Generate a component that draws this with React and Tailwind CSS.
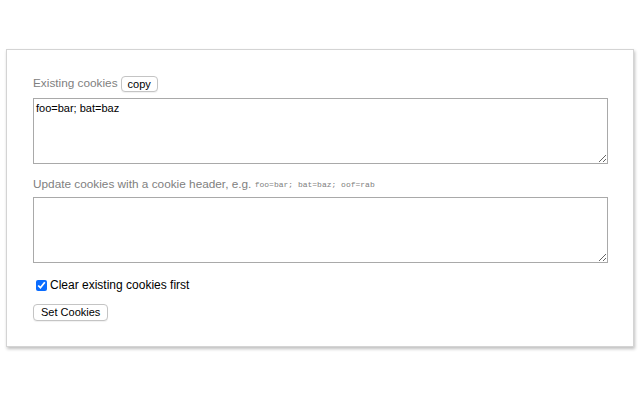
export default function App() {
  return (
    <div className="h-[400px] w-[640px] bg-white font-['Liberation_Sans',Arial,sans-serif]">
      <div className="h-[49px]" />
      <div className="ml-[6px] h-[298px] w-[628px] border border-[#d4d4d4] bg-white px-[26px] pt-[25px] shadow-[1px_2px_3px_rgba(0,0,0,0.25)]">
        <div className="flex h-[18px] items-center gap-[3px] text-[11.8px] text-[#808080]">
          <span>Existing cookies</span>
          <button className="h-[16px] rounded-[4px] border border-[#c4c4c4] bg-white px-[6px] text-[11px] leading-[14px] text-black shadow-[0_1px_1px_rgba(0,0,0,0.06)]">
            copy
          </button>
        </div>
        <textarea
          className="mt-[5px] block h-[66px] w-[575px] resize-y border border-[#a9a9a9] px-[2px] py-[2px] text-[11px] leading-[14px] text-black outline-none"
          defaultValue="foo=bar; bat=baz"
        />
        <div className="mt-[12px] flex h-[18px] items-center text-[11.8px] text-[#808080]">
          <span>Update cookies with a cookie header, e.g.&nbsp;</span>
          <code className="font-['Liberation_Mono','Courier_New',monospace] text-[8px] text-[#808080]">
            foo=bar; bat=baz; oof=rab
          </code>
        </div>
        <textarea className="mt-[3px] block h-[66px] w-[575px] resize-y border border-[#a9a9a9] px-[2px] py-[2px] text-[11px] leading-[14px] text-black outline-none" />
        <label className="mt-[15px] flex h-[14px] items-center gap-[3px] pl-[3px] text-[12px] text-black">
          <input type="checkbox" defaultChecked className="m-0 h-[11px] w-[11px] accent-[#0a6cff]" />
          <span>Clear existing cookies first</span>
        </label>
        <button className="mt-[12px] block h-[17px] rounded-[4px] border border-[#c4c4c4] bg-white px-[7px] text-[11px] leading-[15px] text-black shadow-[0_1px_1px_rgba(0,0,0,0.06)]">
          Set Cookies
        </button>
      </div>
    </div>
  );
}
